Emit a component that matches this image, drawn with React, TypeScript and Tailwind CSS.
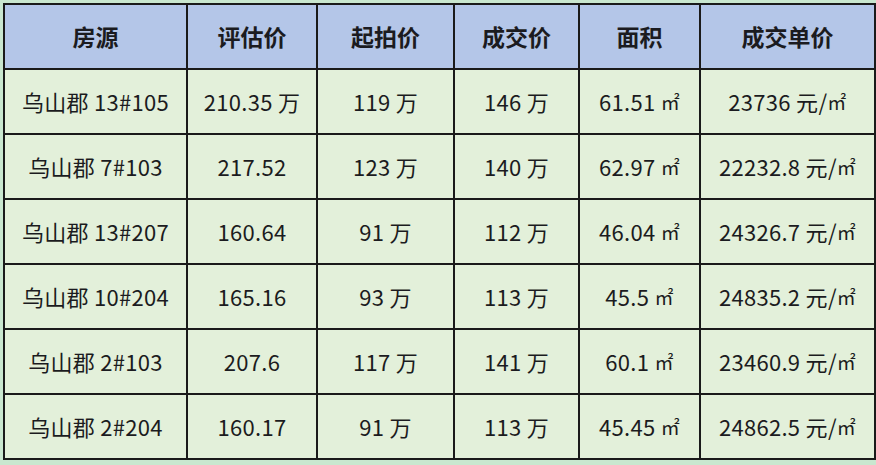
const headers = ["房源", "评估价", "起拍价", "成交价", "面积", "成交单价"];

const rows: string[][] = [
  ["乌山郡 13#105", "210.35 万", "119 万", "146 万", "61.51 ㎡", "23736 元/㎡"],
  ["乌山郡 7#103", "217.52", "123 万", "140 万", "62.97 ㎡", "22232.8 元/㎡"],
  ["乌山郡 13#207", "160.64", "91 万", "112 万", "46.04 ㎡", "24326.7 元/㎡"],
  ["乌山郡 10#204", "165.16", "93 万", "113 万", "45.5 ㎡", "24835.2 元/㎡"],
  ["乌山郡 2#103", "207.6", "117 万", "141 万", "60.1 ㎡", "23460.9 元/㎡"],
  ["乌山郡 2#204", "160.17", "91 万", "113 万", "45.45 ㎡", "24862.5 元/㎡"],
];

const widths = ["w-[183px]", "w-[130px]", "w-[137px]", "w-[125px]", "w-[121px]", "w-[175px]"];

// ㎡ is drawn smaller in the source, so split it off
const renderCell = (text: string) => {
  const parts = text.split("㎡");
  if (parts.length === 1) return text;
  return (
    <>
      {parts[0]}
      <span className="text-[19px] align-[1px]">㎡</span>
    </>
  );
};

const App = () => {
  return (
    <div className="w-[876px] h-[465px] bg-[#c9e7cf] pt-[3px] pl-[3px] font-['Noto_Sans_CJK_SC',sans-serif] text-[#1b1b20]">
      <table className="table-fixed border-collapse border-2 border-[#1a1a1a] w-[871px]">
        <colgroup>
          {widths.map((w, i) => (
            <col key={i} className={w} />
          ))}
        </colgroup>
        <thead>
          <tr className="h-[65px] bg-[#b4c6e8]">
            {headers.map((h) => (
              <th key={h} className="border-2 border-[#1a1a1a] text-[23px] font-bold text-center p-0">
                {h}
              </th>
            ))}
          </tr>
        </thead>
        <tbody>
          {rows.map((r, i) => (
            <tr key={i} className="h-[65px] bg-[#e3f0da]">
              {r.map((c, j) => (
                <td key={j} className="border-2 border-[#1a1a1a] text-[22px] text-center p-0 whitespace-nowrap tracking-[0.3px]">
                  {renderCell(c)}
                </td>
              ))}
            </tr>
          ))}
        </tbody>
      </table>
    </div>
  );
};

export default App;
